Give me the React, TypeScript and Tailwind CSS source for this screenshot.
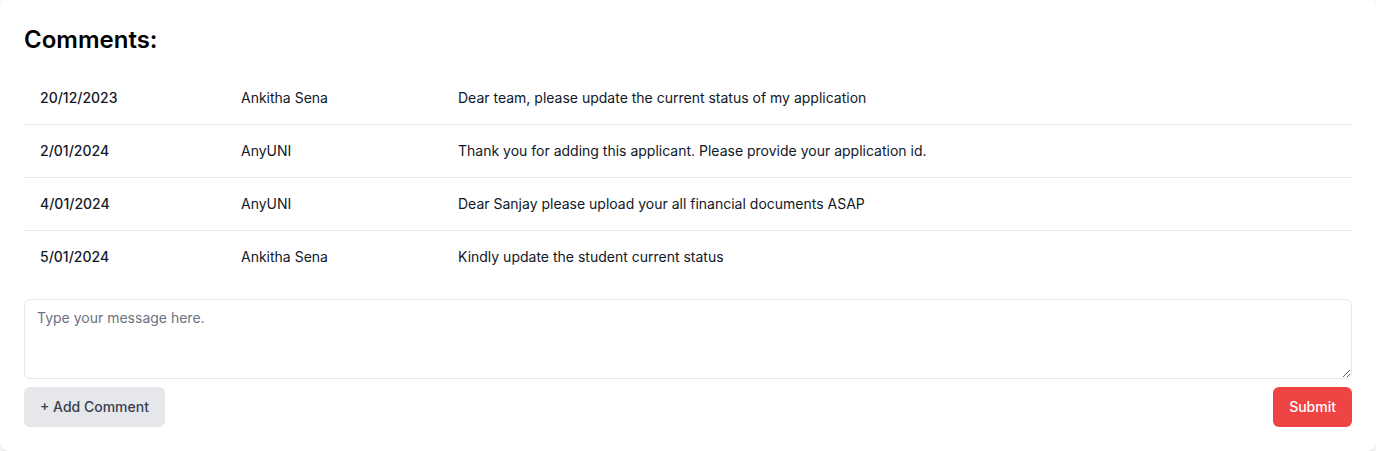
import { useState } from "react";

interface Comment {
  date: string;
  author: string;
  message: string;
}

const comments: Comment[] = [
  {
    date: "20/12/2023",
    author: "Ankitha Sena",
    message: "Dear team, please update the current status of my application",
  },
  {
    date: "2/01/2024",
    author: "AnyUNI",
    message: "Thank you for adding this applicant. Please provide your application id.",
  },
  {
    date: "4/01/2024",
    author: "AnyUNI",
    message: "Dear Sanjay please upload your all financial documents ASAP",
  },
  {
    date: "5/01/2024",
    author: "Ankitha Sena",
    message: "Kindly update the student current status",
  },
];

export default function App() {
  const [text, setText] = useState("");

  return (
    <div className="bg-gray-50 font-['Inter',sans-serif]">
      <div className="rounded-lg bg-white p-6 shadow-sm">
        {/* Header */}
        <h2 className="mb-4 text-2xl font-semibold text-black">Comments:</h2>

        {/* Comment rows */}
        <div className="mb-4">
          {comments.map((c, i) => (
            <div
              key={i}
              className={`grid grid-cols-[201px_217px_1fr] text-sm text-[#111827] ${
                i < comments.length - 1 ? "border-b border-[#e5e7eb]" : ""
              }`}
            >
              <div className="px-4 py-4 font-medium">{c.date}</div>
              <div className="px-4 py-4">{c.author}</div>
              <div className="px-4 py-4">{c.message}</div>
            </div>
          ))}
        </div>

        {/* Message box */}
        <textarea
          value={text}
          onChange={(e) => setText(e.target.value)}
          placeholder="Type your message here."
          className="block h-20 w-full rounded-md border border-[#e5e7eb] px-3 py-2 text-sm text-[#111827] placeholder:text-[#6b7280] focus:outline-none"
        />

        <div className="mt-2 flex items-center justify-between">
          <button className="h-10 rounded-md bg-[#e5e7eb] px-4 text-sm font-medium text-[#374151]">
            + Add Comment
          </button>
          <button className="h-10 rounded-md bg-[#ef4444] px-4 text-sm font-medium text-white">
            Submit
          </button>
        </div>
      </div>
    </div>
  );
}
